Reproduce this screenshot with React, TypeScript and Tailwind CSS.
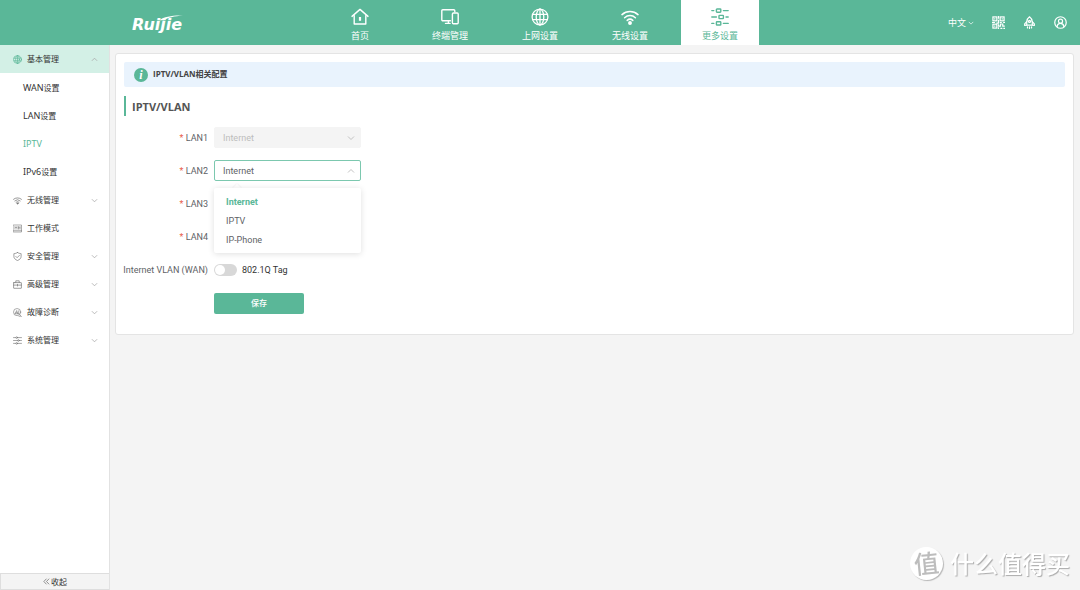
import { useState } from "react";
import type { ReactNode } from "react";

type IconProps = { className?: string };

function Svg({ className, children, box = 24, width = 2 }: IconProps & { children: ReactNode; box?: number; width?: number }) {
  return (
    <svg
      className={className}
      viewBox={`0 0 ${box} ${box}`}
      fill="none"
      stroke="currentColor"
      strokeWidth={width}
      strokeLinecap="round"
      strokeLinejoin="round"
      aria-hidden="true"
    >
      {children}
    </svg>
  );
}

const HomeIcon = ({ className }: IconProps) => (
  <Svg className={className} box={18} width={1.4}>
    <path d="M1 8.400 9 1.400 17 8.400" />
    <path d="M3.200 7.600v8.400h11.600V7.600" />
    <path d="M9 9v3.800" strokeWidth="2.200" strokeLinecap="butt" />
  </Svg>
);

const DevicesIcon = ({ className }: IconProps) => (
  <Svg className={className} box={18} width={1.4}>
    <path d="M9.400 12.800H1.800a1 1 0 0 1-1-1V2.800a1 1 0 0 1 1-1h11a1 1 0 0 1 1 1v1" />
    <path d="M4.500 15.400h4.600M7.400 13v2.400" />
    <rect x="11.400" y="5" width="5.800" height="10.800" rx="1" />
  </Svg>
);

const GlobeIcon = ({ className }: IconProps) => (
  <Svg className={className} box={18} width={1.3}>
    <circle cx="9" cy="9" r="7.900" />
    <ellipse cx="9" cy="9" rx="3.800" ry="7.900" />
    <path d="M9 1v16M1.600 6.400h14.800M1.600 11.600h14.800" />
  </Svg>
);

const WifiIcon = ({ className }: IconProps) => (
  <Svg className={className} box={18} width={1.5}>
    <path d="M1 6.600a12 12 0 0 1 16 0" />
    <path d="M3.600 9.700a8 8 0 0 1 10.800 0" />
    <path d="M6.200 12.400a4.200 4.200 0 0 1 5.600 0" />
    <circle cx="9" cy="15" r="1.200" fill="currentColor" />
  </Svg>
);

const SlidersIcon = ({ className }: IconProps) => (
  <Svg className={className} box={18} width={1.4}>
    <path d="M.8 2.600h2M12.400 2.600h4.800M.8 9h4.600M15 9h2.200M.8 15.400h2M12.400 15.400h4.800" />
    <rect x="5.400" y="1" width="4.400" height="3.200" rx=".6" />
    <rect x="8" y="7.400" width="4.400" height="3.200" rx=".6" />
    <rect x="5.400" y="13.800" width="4.400" height="3.200" rx=".6" />
  </Svg>
);

const QrIcon = ({ className }: IconProps) => (
  <svg className={className} viewBox="0 0 14 14" fill="none" stroke="currentColor" strokeWidth="1.3" aria-hidden="true">
    <rect x="1" y="1" width="4.200" height="4.200" />
    <rect x="8.800" y="1" width="4.200" height="4.200" />
    <rect x="1" y="8.800" width="4.200" height="4.200" />
    <path d="M3 2.400v1.400M11 2.400v1.400M3 10.200v1.400M7 0v3M7 4v3.600H4.600M0 7h3.200M8.400 7h2.200M12 7h2M7 9v2h2.200V8.600h2.400v2.200h2.200M7 12v2M9 13.300h2.200M12.200 13.300H14" />
  </svg>
);

const RocketIcon = ({ className }: IconProps) => (
  <Svg className={className} box={14} width={1.3}>
    <path d="M7 .8C4.800 2.400 4 4.400 4 6.400v3.400h6V6.400c0-2-.8-4-3-5.600Z" />
    <circle cx="7" cy="5.800" r="1.100" />
    <path d="M4 6 1.800 8.400v1.800L4 9.800M10 6l2.200 2.400v1.800L10 9.800M4.800 11.800v1M7 11.800v1.600M9.200 11.800v1" />
  </Svg>
);

const UserIcon = ({ className }: IconProps) => (
  <Svg className={className} box={14} width={1.3}>
    <circle cx="7" cy="7" r="6.200" />
    <circle cx="7" cy="5.600" r="2.200" />
    <path d="M3.400 11.400c.2-2.200 1.400-3.400 3.600-3.400s3.400 1.200 3.600 3.400" />
  </Svg>
);

const ModeIcon = ({ className }: IconProps) => (
  <Svg className={className} box={18} width={1.2}>
    <rect x="1" y="2" width="16" height="14" />
    <path d="M1 13.400h16M4 10.400V5l2 3 2-3v5.400M11 5v5.400M14 5v5.400M11 7.600h3" />
  </Svg>
);

const ShieldIcon = ({ className }: IconProps) => (
  <Svg className={className} box={18} width={1.4}>
    <path d="M9 1c2.400 1.600 4.800 2.200 7.200 2.200v5.600c0 3.800-2.600 6.400-7.200 8.200-4.600-1.800-7.200-4.400-7.200-8.200V3.200C4.200 3.200 6.600 2.600 9 1Z" />
    <path d="m5.600 8.800 2.600 2.600 4.600-4.600" />
  </Svg>
);

const CaseIcon = ({ className }: IconProps) => (
  <Svg className={className} box={18} width={1.4}>
    <rect x="1.200" y="5.200" width="15.600" height="11.400" rx=".6" />
    <path d="M5.600 5V1.600h6.800V5M1.200 10.200h15.600M9 8.600v3.400" />
  </Svg>
);

const DiagnoseIcon = ({ className }: IconProps) => (
  <Svg className={className} box={18} width={1.2}>
    <circle cx="8.200" cy="8.200" r="7.200" />
    <path d="m13.400 13.400 3.600 3.600M4.400 11.400l3-6.400 1.800 6.400M6 9.400h2.600M11.400 5.600v5.800M4 11.600h8.400M12 16.600h3" />
  </Svg>
);

const SystemIcon = ({ className }: IconProps) => (
  <Svg className={className} box={18} width={1.3}>
    <path d="M1 3.200h4.600M9.400 3.200H17M1 9h8M12.800 9H17M1 14.800h4.600M9.400 14.800H17" />
    <circle cx="7.500" cy="3.200" r="1.700" />
    <circle cx="10.900" cy="9" r="1.700" />
    <circle cx="7.500" cy="14.800" r="1.700" />
  </Svg>
);

const Chevron = ({ className }: IconProps) => (
  <svg className={className} viewBox="0 0 8 8" fill="none" stroke="currentColor" strokeWidth="0.9" aria-hidden="true">
    <path d="m1 2.500 3 3 3-3" />
  </svg>
);

const navItems = [
  { label: "首页", Icon: HomeIcon },
  { label: "终端管理", Icon: DevicesIcon },
  { label: "上网设置", Icon: GlobeIcon },
  { label: "无线设置", Icon: WifiIcon },
  { label: "更多设置", Icon: SlidersIcon, active: true },
];

const subItems = [
  { latin: "WAN", rest: "设置" },
  { latin: "LAN", rest: "设置" },
  { latin: "IPTV", rest: "", active: true },
  { latin: "IPv6", rest: "设置" },
];

const groups = [
  { label: "无线管理", Icon: WifiIcon, expandable: true },
  { label: "工作模式", Icon: ModeIcon, expandable: false },
  { label: "安全管理", Icon: ShieldIcon, expandable: true },
  { label: "高级管理", Icon: CaseIcon, expandable: true },
  { label: "故障诊断", Icon: DiagnoseIcon, expandable: true },
  { label: "系统管理", Icon: SystemIcon, expandable: true },
];

const options = ["Internet", "IPTV", "IP-Phone"];

function Header() {
  return (
    <header className="grid h-[45px] shrink-0 grid-cols-[1fr_auto_1fr] bg-[#5ab798] text-white">
      <a href="#home" aria-label="Ruijie" className="relative ml-[132px] flex items-center self-center justify-self-start pt-1">
        <span className="font-['DejaVu_Sans',sans-serif] text-[16px] leading-4 font-bold italic">Ruijie</span>
        <svg className="absolute top-[2px] left-[27px] h-[6px] w-[25px]" viewBox="0 0 24 6" fill="currentColor" aria-hidden="true">
          <path d="M0 5.200C5 1.600 13 .2 23.500.6 15 1.400 8 2.600 4.500 5.200Z" />
        </svg>
      </a>
      <nav className="flex gap-3">
        {navItems.map(({ label, Icon, active }) => (
          <a
            key={label}
            href="#nav"
            className={`flex w-[78px] flex-col items-center gap-1 pt-2 text-[9px] leading-3 ${active ? "bg-white text-[#5ab798]" : ""}`}
          >
            <Icon className="size-[18px]" />
            <span>{label}</span>
          </a>
        ))}
      </nav>
      <div className="flex items-center justify-end gap-[18px] pr-[13px]">
        <button type="button" className="flex items-center gap-[2px] text-[9px] leading-3">
          中文
          <Chevron className="size-[6px]" />
        </button>
        <button type="button" aria-label="QR">
          <QrIcon className="size-[13px]" />
        </button>
        <button type="button" aria-label="Rocket">
          <RocketIcon className="size-[13px]" />
        </button>
        <button type="button" aria-label="User">
          <UserIcon className="size-[13px]" />
        </button>
      </div>
    </header>
  );
}

function Sidebar() {
  return (
    <aside className="flex w-[110px] shrink-0 flex-col border-r border-[#e2e2e2] bg-white text-[8px] text-[#333]">
      <button type="button" className="flex h-7 items-center bg-[#d3f0e6] pr-[11px] pl-[13px]">
        <GlobeIcon className="mr-[5px] size-[9px] text-[#5ab798]" />
        基本管理
        <Chevron className="ml-auto size-[7px] rotate-180 text-[#aaa]" />
      </button>
      <nav className="flex flex-col pt-px">
        {subItems.map(({ latin, rest, active }) => (
          <a key={latin} href="#sub" className={`flex h-7 items-center pl-[23px] ${active ? "text-[#5ab798]" : ""}`}>
            <span>
              <span className="text-[9px]">{latin}</span>
              {rest}
            </span>
          </a>
        ))}
      </nav>
      {groups.map(({ label, Icon, expandable }) => (
        <button key={label} type="button" className="flex h-7 items-center pr-[11px] pl-[13px]">
          <Icon className="mr-[5px] size-[9px] text-[#777]" />
          {label}
          {expandable && <Chevron className="ml-auto size-[7px] text-[#aaa]" />}
        </button>
      ))}
      <button type="button" className="mt-auto flex h-[17px] items-center justify-center gap-px border border-r-0 border-[#dedede] bg-[#f4f4f4]">
        <svg className="size-[7px] text-[#777]" viewBox="0 0 8 8" fill="none" stroke="currentColor" strokeWidth="0.9" aria-hidden="true">
          <path d="M4 .8 1 4l3 3.200M7 .8 4 4l3 3.200" />
        </svg>
        收起
      </button>
    </aside>
  );
}

function LanRow({ name, disabled = false, initialOpen = false }: { name: string; disabled?: boolean; initialOpen?: boolean }) {
  const [open, setOpen] = useState(initialOpen);
  const [value, setValue] = useState("Internet");
  return (
    <div className="flex h-[21px] items-center gap-[6px]">
      <label htmlFor={name} className="w-[84px] text-right">
        <span className="text-[#e8604c]">*</span> {name}
      </label>
      <div className="relative w-[147px]">
        <select
          id={name}
          value={value}
          disabled={disabled}
          onChange={(e) => setValue(e.target.value)}
          onMouseDown={(e) => {
            e.preventDefault();
            setOpen(!open);
          }}
          className={`block h-[21px] w-full appearance-none rounded-[2px] border pl-2 opacity-100 outline-none ${
            disabled ? "border-[#f4f4f4] bg-[#f4f4f4] text-[#bdbdbd]" : open ? "border-[#7cc8af] bg-white" : "border-[#ddd] bg-white"
          }`}
        >
          {options.map((o) => (
            <option key={o}>{o}</option>
          ))}
        </select>
        <Chevron className={`pointer-events-none absolute top-[7px] right-[6px] size-2 text-[#bbb] ${open ? "rotate-180" : ""}`} />
        {open && (
          <div className="absolute top-[28px] left-0 z-10 w-full">
            <span className="absolute -top-[3px] left-[20px] size-[6px] rotate-45 bg-white shadow-[0_0_2px_rgba(0,0,0,0.1)]" />
            <ul role="listbox" aria-label={name} className="relative rounded-[2px] bg-white py-1 shadow-[0_1px_6px_rgba(0,0,0,0.13)]">
              {options.map((o) => (
                <li
                  key={o}
                  role="option"
                  aria-selected={o === value}
                  onClick={() => {
                    setValue(o);
                    setOpen(false);
                  }}
                  className={`flex h-[19px] cursor-pointer items-center pl-3 ${o === value ? "font-bold text-[#5ab798]" : ""}`}
                >
                  {o}
                </li>
              ))}
            </ul>
          </div>
        )}
      </div>
    </div>
  );
}

function Watermark() {
  return (
    <div className="pointer-events-none fixed right-[10px] bottom-[10px] flex items-center gap-[7px] text-white">
      <span className="flex size-[33px] items-center justify-center rounded-full bg-white text-[25px] leading-none font-medium text-[#bdbdbd] shadow-[1px_1px_1px_rgba(0,0,0,0.25)]">
        <span className="-rotate-6">值</span>
      </span>
      <span className="text-[24px] leading-8 font-medium [text-shadow:1px_1px_1px_rgba(0,0,0,0.3)]">什么值得买</span>
    </div>
  );
}

export default function App() {
  return (
    <div className="flex min-h-screen flex-col bg-[#f4f4f4] font-['Noto_Sans','Noto_Sans_CJK_SC',sans-serif] text-[8px] leading-3 text-[#606266]">
      <Header />
      <div className="flex grow">
        <Sidebar />
        <main className="min-w-0 grow pt-2 pr-[6px] pl-[5px]">
          <section className="rounded-[3px] border border-[#e4e4e4] bg-white px-2 pt-2 pb-5">
            <div className="flex h-[25px] items-center gap-[5px] rounded-[2px] bg-[#e9f3fd] pl-[10px] font-['Open_Sans','Noto_Sans_CJK_SC',sans-serif] font-bold text-[#444]">
              <span className="flex size-[14px] items-center justify-center rounded-full bg-[#5ab798] font-['Liberation_Serif',serif] text-[12px] leading-none text-white italic">
                i
              </span>
              <p className="pb-[2px]">IPTV/VLAN相关配置</p>
            </div>
            <h1 className="mt-[9px] flex h-5 items-center border-l-2 border-[#5ab798] pt-px pl-[6px] font-['Open_Sans',sans-serif] text-[11px] font-bold text-[#555]">
              IPTV/VLAN
            </h1>
            <form
              className="mt-[11px] flex flex-col gap-3 font-['Roboto','Noto_Sans_CJK_SC',sans-serif] text-[9px]"
              onSubmit={(e) => e.preventDefault()}
            >
              <LanRow name="LAN1" disabled />
              <LanRow name="LAN2" initialOpen />
              <LanRow name="LAN3" />
              <LanRow name="LAN4" />
              <div className="flex h-[22px] items-center gap-[6px]">
                <label htmlFor="vlan" className="flex w-[84px] justify-end whitespace-nowrap">
                  Internet VLAN (WAN)
                </label>
                <label className="flex items-center gap-[5px] text-[#333]">
                  <input
                    id="vlan"
                    type="checkbox"
                    role="switch"
                    className="h-3 w-[23px] appearance-none rounded-full bg-[#d8d8d8] p-px before:block before:size-[10px] before:rounded-full before:bg-white checked:bg-[#5ab798] checked:before:ml-auto"
                  />
                  802.1Q Tag
                </label>
              </div>
              <button type="submit" className="ml-[90px] h-[21px] w-[90px] rounded-[2px] bg-[#5ab798] text-[8px] font-medium text-white">
                保存
              </button>
            </form>
          </section>
        </main>
      </div>
      <Watermark />
    </div>
  );
}
